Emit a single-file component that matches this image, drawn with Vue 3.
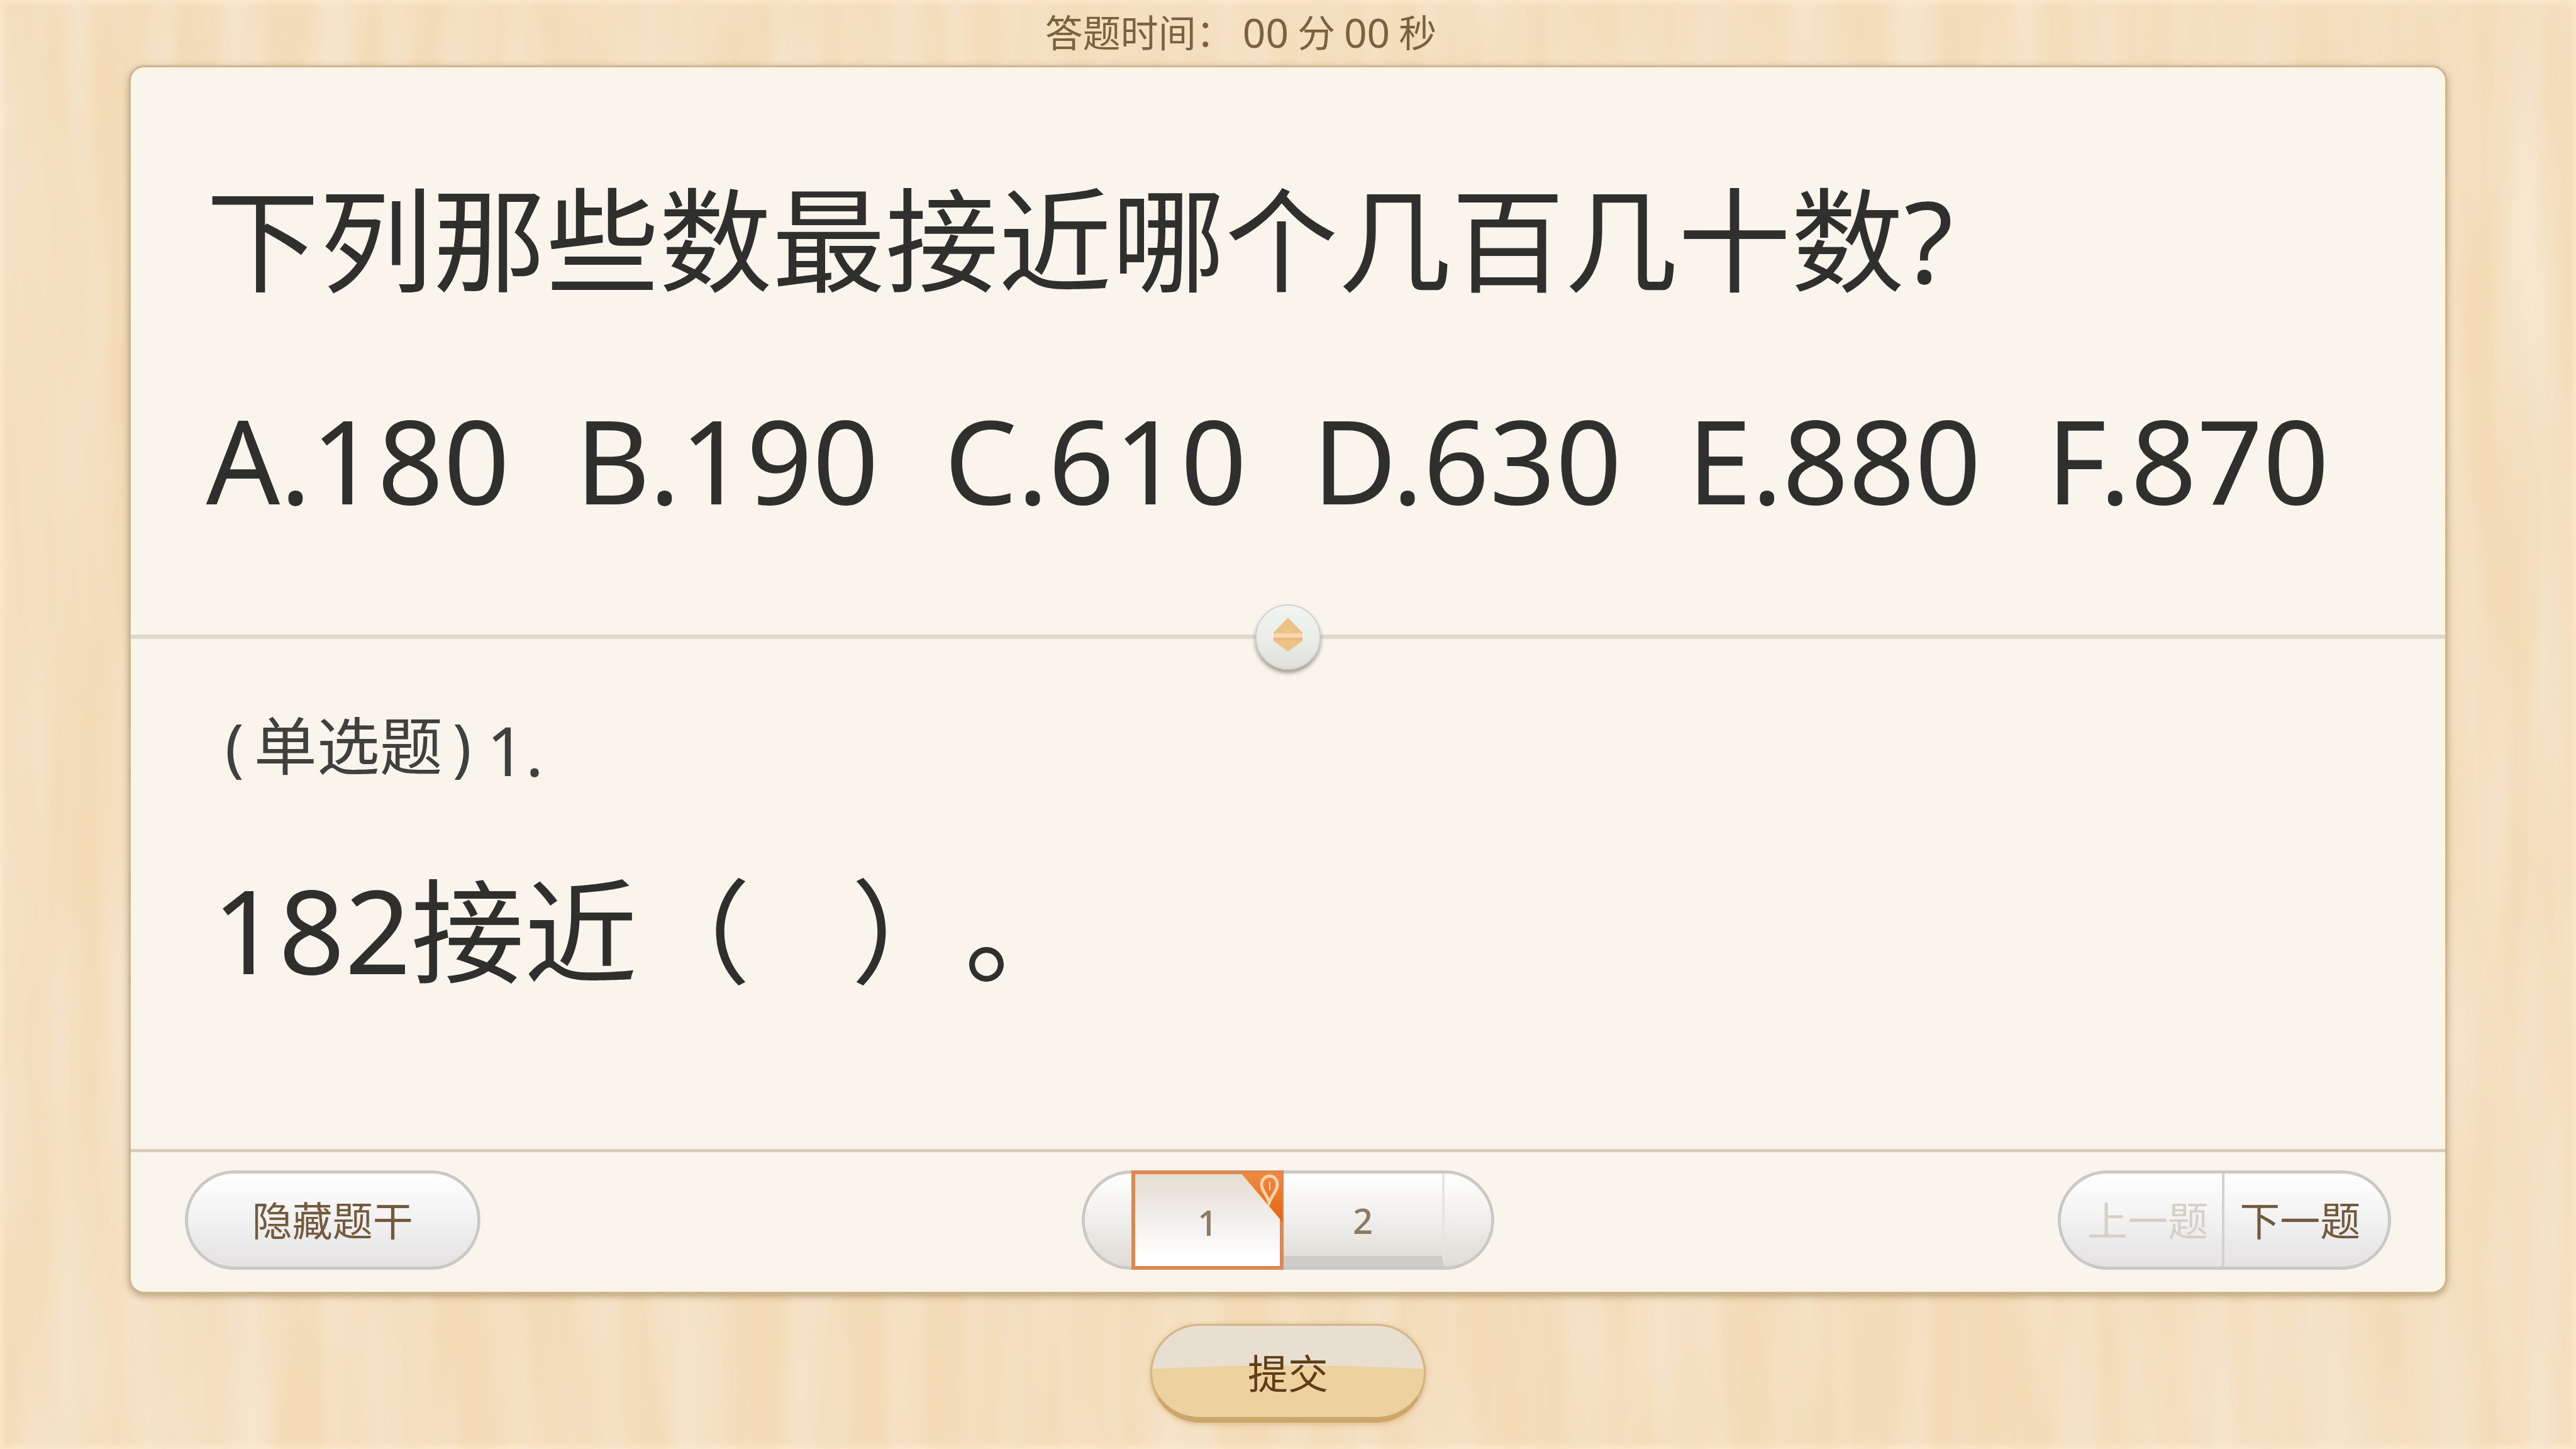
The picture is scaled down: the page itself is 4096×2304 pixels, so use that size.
<script setup>
import { ref } from 'vue'

const minutes = ref('00')
const seconds = ref('00')
const stemVisible = ref(true)
const current = ref(1)
const pages = [1, 2]
const options = ['A.180', 'B.190', 'C.610', 'D.630', 'E.880', 'F.870']
</script>

<template>
  <div class="page">
    <svg class="wood" preserveAspectRatio="none" aria-hidden="true">
      <filter id="grain" x="0" y="0" width="100%" height="100%">
        <feTurbulence type="fractalNoise" baseFrequency="0.014 0.0012" numOctaves="3" seed="8" />
        <feColorMatrix values="0 0 0 0 0.9  0 0 0 0 0.78  0 0 0 0 0.58  1.1 0 0 0 -0.38" />
      </filter>
      <filter id="shine" x="0" y="0" width="100%" height="100%">
        <feTurbulence type="fractalNoise" baseFrequency="0.012 0.0016" numOctaves="2" seed="21" />
        <feColorMatrix values="0 0 0 0 0.97  0 0 0 0 0.88  0 0 0 0 0.77  1 0 0 0 -0.4" />
      </filter>
      <rect width="100%" height="100%" filter="url(#grain)" />
      <rect width="100%" height="100%" filter="url(#shine)" />
    </svg>

    <header class="timer">
      <span>答题时间：</span>
      <span class="digits">{{ minutes }}</span>
      <span>分</span>
      <span class="digits">{{ seconds }}</span>
      <span>秒</span>
    </header>

    <main class="card">
      <section v-show="stemVisible" class="stem">
        <h1 class="title">下列那些数最接近哪个几百几十数?</h1>
        <p class="options">
          <span v-for="o in options" :key="o">{{ o }}</span>
        </p>
      </section>

      <div class="divider">
        <button class="handle" type="button" aria-label="拖动">
          <svg viewBox="0 0 48 56" aria-hidden="true">
            <path d="M24 1 47 25v5H1v-5z" fill="#ecc384" />
            <path d="M1 26h46v8H1z" fill="#f6d5b2" />
            <path d="M1 34h46v4L24 55 1 38z" fill="#ebc486" />
            <path d="M1 33h46v4H1z" fill="#e8b880" />
          </svg>
        </button>
      </div>

      <section class="question">
        <p class="kind">
          <span>(</span><span>单选题</span><span>)</span><span class="number">1.</span>
        </p>
        <p class="body"><span class="figure">182</span>接近（<span class="blank"></span>）。</p>
      </section>

      <footer class="bar">
        <button class="pill toggle" type="button" @click="stemVisible = !stemVisible">隐藏题干</button>
        <nav class="pill pager">
          <button
            v-for="p in pages"
            :key="p"
            type="button"
            class="num"
            :class="{ active: p === current }"
            @click="current = p"
          >
            {{ p }}
            <svg v-if="p === current" class="flag" viewBox="0 0 66 78" aria-hidden="true">
              <defs>
                <linearGradient id="flagFill" x1="0" y1="0" x2="0" y2="1">
                  <stop offset="0" stop-color="#ee8a44" />
                  <stop offset="1" stop-color="#e2650f" />
                </linearGradient>
              </defs>
              <path d="M0 0h66v78z" fill="url(#flagFill)" />
              <path d="M46 5c-8 0-13 6-13 14 0 9 9 16 12 28 5-12 13-19 13-28 0-8-5-14-12-14z" fill="none" stroke="#ffd3a6" stroke-width="5" />
              <path d="M46 14v14" stroke="#ffd3a6" stroke-width="2" />
            </svg>
          </button>
        </nav>
        <div class="pill steps">
          <button type="button" class="prev" :disabled="current === 1" @click="current--">上一题</button>
          <button type="button" class="next" :disabled="current === pages.length" @click="current++">下一题</button>
        </div>
      </footer>
    </main>

    <div class="submit-row">
      <button class="submit" type="button">提交</button>
    </div>
  </div>
</template>

<style>
body {
  margin: 0;
}
</style>

<style scoped>
.page {
  position: relative;
  box-sizing: border-box;
  min-height: 100vh;
  padding: 0 5%;
  display: flex;
  flex-direction: column;
  background: #f3dbb8;
  box-shadow: inset 0 0 12px 4px #ffe8c8;
  font-family: "Noto Sans", "Noto Sans CJK SC", sans-serif;
  text-spacing-trim: space-all;
  color: #2f2f2d;
}
.wood {
  position: absolute;
  inset: 0;
  width: 100%;
  height: 100%;
}
button {
  margin: 0;
  padding: 0;
  border: 0;
  background: none;
  font: inherit;
  color: inherit;
  cursor: pointer;
}
.timer {
  position: relative;
  display: flex;
  justify-content: center;
  align-items: center;
  gap: 14px;
  padding-right: 150px;
  height: 104px;
  font-size: 60px;
  line-height: 104px;
  color: #78623f;
}
.timer .digits {
  font-size: 64px;
}
.card {
  position: relative;
  flex: 1;
  display: flex;
  flex-direction: column;
  border: 3px solid #cdb78f;
  border-radius: 24px;
  background: #f9f4ec;
  box-shadow: 0 4px 12px rgba(130, 100, 50, 0.5), inset 0 0 16px #fff5e0;
}
.stem {
  padding: 124px 120px 128px;
}
.title,
.options,
.kind,
.body {
  margin: 0;
  font-weight: 400;
}
.title {
  font-size: 180px;
  line-height: 300px;
}
.options {
  display: flex;
  gap: 104px;
  margin-top: 50px;
  font-size: 184px;
  line-height: 300px;
  white-space: nowrap;
}
.divider {
  position: relative;
  display: flex;
  justify-content: center;
  height: 7px;
  background: #e0d9cd;
}
.handle {
  position: absolute;
  top: -48px;
  display: flex;
  align-items: center;
  justify-content: center;
  width: 104px;
  height: 104px;
  border: 2px solid #d3d1c9;
  border-radius: 50%;
  background: linear-gradient(#f2f4f1, #eaece8 60%, #dfdfda);
  box-shadow: 0 5px 6px rgba(110, 105, 90, 0.65);
}
.handle svg {
  width: 48px;
  height: 56px;
  margin-bottom: 8px;
}
.question {
  flex: 1;
  padding: 94px 130px 0;
}
.kind {
  display: flex;
  gap: 16px;
  padding-left: 20px;
  font-size: 100px;
  line-height: 150px;
  color: #40403e;
}
.number {
  padding-top: 8px;
  margin-left: 8px;
  font-size: 108px;
}
.body {
  margin-top: 60px;
  font-size: 180px;
  line-height: 300px;
}
.figure {
  font-size: 184px;
}
.blank {
  display: inline-block;
  width: 160px;
}
.bar {
  display: grid;
  grid-template-columns: 1fr auto 1fr;
  align-items: center;
  height: 216px;
  padding: 0 86px 6px;
  border-top: 5px solid #d8cbb8;
  font-size: 64px;
  color: #735a3c;
}
.pill {
  box-sizing: border-box;
  height: 158px;
  border: 5px solid #cbc9c5;
  border-radius: 80px;
  background: linear-gradient(#ffffff, #f3f3f4 45%, #e4e2e3);
}
.toggle {
  justify-self: start;
  width: 470px;
  padding-bottom: 6px;
}
.pager {
  display: flex;
  padding: 0 74px;
  background: linear-gradient(#ffffff, #f1f0ee 45%, #dfdbd4);
}
.num {
  position: relative;
  box-sizing: border-box;
  width: 256px;
  font-size: 56px;
  font-weight: 500;
  color: #8c7a64;
  border-right: 4px solid #e6e5e2;
  border-bottom: 17px solid #cecdcb;
  padding-top: 17px;
}
.num.active {
  width: 242px;
  margin: -5px 0;
  padding-top: 6px;
  border: 6px solid #dd8852;
  background: linear-gradient(#e4ddd2, #f2efec 50%, #ffffff 90%);
}
.flag {
  position: absolute;
  top: -2px;
  right: -4px;
  width: 66px;
  height: 78px;
}
.steps {
  justify-self: end;
  display: flex;
}
.prev {
  padding: 0 22px 6px 42px;
  border-right: 4px solid #d3d2d0;
}
.next {
  padding: 0 44px 6px 24px;
}
.steps button:disabled {
  color: #d5d0c8;
  cursor: default;
}
.submit-row {
  position: relative;
  display: flex;
  justify-content: center;
  padding: 48px 0 42px;
}
.submit {
  box-sizing: border-box;
  width: 438px;
  height: 157px;
  border: 3px solid #d2b487;
  border-bottom: 9px solid #cca66a;
  border-radius: 80px;
  background: radial-gradient(ellipse 130% 50% at 50% 92%, #edd2a0 96%, transparent 98%), #e9dfd0;
  box-shadow: 0 2px 8px rgba(200, 150, 80, 0.5);
  font-size: 64px;
  color: #5e3e18;
}
</style>
